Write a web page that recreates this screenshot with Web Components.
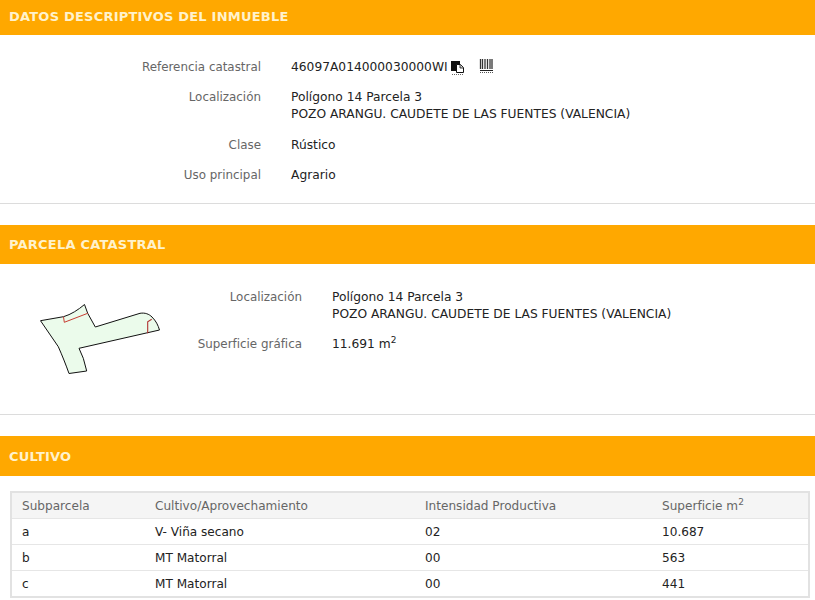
<!DOCTYPE html>
<html lang="es">
<head>
<meta charset="utf-8">
<title>Datos del inmueble</title>
<style>
  html, body { margin: 0; padding: 0; background: #fff; }
  body { font: 12.25px/17px "DejaVu Sans", sans-serif; color: #222; width: 815px; height: 600px; overflow: hidden; }
  x-section.first { --barHeight: 35px; --barPad: 0 0 3px; --bodyHeight: 169px; --gapAfter: 21px; }
  x-section.second { --barHeight: 39px; --bodyHeight: 151px; --gapAfter: 21px; }
  x-section.third { --barHeight: 40px; --barPad: 1px 0 0; --bodyHeight: auto; --gapAfter: 0; --ruleWidth: 0; }
</style>
</head>
<body>
<x-section class="first" title-text="DATOS DESCRIPTIVOS DEL INMUEBLE">
  <x-rows style="--labelWidth: 261px; --top: 24px">
    <x-row label="Referencia catastral">46097A014000030000WI<x-copy-icon></x-copy-icon><x-barcode-icon></x-barcode-icon></x-row>
    <x-row label="Localización">Polígono 14 Parcela 3<br>POZO ARANGU. CAUDETE DE LAS FUENTES (VALENCIA)</x-row>
    <x-row label="Clase" style="margin-top: 1px">Rústico</x-row>
    <x-row label="Uso principal">Agrario</x-row>
  </x-rows>
</x-section>

<x-section class="second" title-text="PARCELA CATASTRAL">
  <x-parcel>
    <x-parcel-map slot="map"></x-parcel-map>
    <x-rows style="--labelWidth: 112px; --top: 25px">
      <x-row label="Localización">Polígono 14 Parcela 3<br>POZO ARANGU. CAUDETE DE LAS FUENTES (VALENCIA)</x-row>
      <x-row label="Superficie gráfica">11.691 m<sup style="font-size:9px;line-height:0;vertical-align:5px">2</sup></x-row>
    </x-rows>
  </x-parcel>
</x-section>

<x-section class="third" title-text="CULTIVO">
  <x-crop-table></x-crop-table>
</x-section>

<script>
class Section extends HTMLElement {
  constructor() {
    super();
    this.attachShadow({ mode: "open" });
    this.shadowRoot.innerHTML = /*html*/ `
    <style>
      :host { display: block; margin-bottom: var(--gapAfter, 0); }
      h2 {
        box-sizing: border-box;
        height: var(--barHeight, 40px);
        margin: 0;
        padding: var(--barPad, 0);
        padding-left: 9px;
        display: flex;
        align-items: center;
        background: #ffa800;
        color: #fff2cc;
        font: bold 13px "DejaVu Sans", sans-serif;
        letter-spacing: .22px;
      }
      .body {
        box-sizing: border-box;
        height: var(--bodyHeight, auto);
        border-bottom: var(--ruleWidth, 1px) solid #dcdcdc;
      }
    </style>
    <h2></h2>
    <div class="body"><slot></slot></div>
    `;
    this.shadowRoot.querySelector("h2").textContent = this.getAttribute("title-text");
  }
}

class Rows extends HTMLElement {
  constructor() {
    super();
    this.attachShadow({ mode: "open" });
    this.shadowRoot.innerHTML = /*html*/ `
    <style>
      :host { display: flex; flex-direction: column; gap: 13px; padding-top: var(--top, 0); }
    </style>
    <slot></slot>
    `;
  }
}

class Row extends HTMLElement {
  constructor() {
    super();
    this.attachShadow({ mode: "open" });
    this.shadowRoot.innerHTML = /*html*/ `
    <style>
      :host { display: flex; gap: 30px; }
      .label { width: var(--labelWidth); flex: none; text-align: right; color: #666; font-size: 11.9px; }
      .value { color: #222; }
    </style>
    <div class="label"></div>
    <div class="value"><slot></slot></div>
    `;
    this.shadowRoot.querySelector(".label").textContent = this.getAttribute("label");
  }
}

class CopyIcon extends HTMLElement {
  constructor() {
    super();
    this.attachShadow({ mode: "open" });
    this.shadowRoot.innerHTML = /*html*/ `
    <style>
      :host { display: inline-block; width: 14px; height: 16px; margin-left: 3px; vertical-align: -5px; }
      svg { display: block; }
    </style>
    <svg width="14" height="16" viewBox="0 0 14 16">
      <path d="M0 1h9v3h-3v7H0z" fill="#111"/>
      <path d="M5.5 4.5h4l3 3v5h-7z" fill="#fff" stroke="#111"/>
      <path d="M9 4.5v3.5h3.5" fill="#ccc" stroke="#111" stroke-width=".8"/>
      <path d="M1 14.5h11" stroke="#666" stroke-dasharray="1 1"/>
    </svg>
    `;
  }
}

class BarcodeIcon extends HTMLElement {
  constructor() {
    super();
    this.attachShadow({ mode: "open" });
    this.shadowRoot.innerHTML = /*html*/ `
    <style>
      :host { display: inline-block; width: 15px; height: 16px; margin-left: 14px; vertical-align: -4px; }
      svg { display: block; }
    </style>
    <svg width="15" height="16" viewBox="0 0 15 16">
      <path d="M1.5 0v10M3.5 0v10M6 0v10M8.5 0v10M11 0v10M13 0v10" stroke="#333" stroke-width="1.3"/>
      <path d="M1 11.5h13" stroke="#222"/>
      <path d="M1 13.5h13" stroke="#555" stroke-dasharray="1 1"/>
    </svg>
    `;
  }
}

class Parcel extends HTMLElement {
  constructor() {
    super();
    this.attachShadow({ mode: "open" });
    this.shadowRoot.innerHTML = /*html*/ `
    <style>
      :host { display: flex; }
      .map { width: 150px; flex: none; padding: 39px 0 0 40px; }
    </style>
    <div class="map"><slot name="map"></slot></div>
    <slot></slot>
    `;
  }
}

class ParcelMap extends HTMLElement {
  constructor() {
    super();
    this.attachShadow({ mode: "open" });
    this.shadowRoot.innerHTML = /*html*/ `
    <style>
      :host { display: block; width: 130px; height: 80px; }
      svg { display: block; }
    </style>
    <svg width="130" height="80" viewBox="40 303 130 80">
      <path d="M40.5 320.7L63.5 316.7C71 314.5 78 310 84.5 304.5L87.7 313.3L95.3 327L140 313.3C145 312.5 149 314 152 317C156 321 158 325 159.5 330L79 348.3L83.3 358.3L86.7 371L69 373.5C66 365 62 355 58.3 346.7Z"
        fill="#ebfbeb" stroke="#111" stroke-width="1"/>
      <path d="M63.5 316.7L64.3 322.3L87.7 313.3" fill="none" stroke="#c83c32"/>
      <path d="M147.7 333.3V321.7L151.7 319.3" fill="none" stroke="#b03030" stroke-width="1.1"/>
    </svg>
    `;
  }
}

class CropTable extends HTMLElement {
  #rows = [
    ["a", "V- Viña secano", "02", "10.687"],
    ["b", "MT Matorral", "00", "563"],
    ["c", "MT Matorral", "00", "441"],
  ];
  constructor() {
    super();
    this.attachShadow({ mode: "open" });
    this.shadowRoot.innerHTML = /*html*/ `
    <style>
      :host { display: block; padding: 15px 5px 0 10px; font-size: 12.1px; }
      .table { border: 2px solid #e2e2e2; }
      .row {
        display: grid;
        grid-template-columns: 133px 270px 237px 1fr;
        height: 26px;
        padding-top: 1px;
        align-items: center;
        border-top: 1px solid #e6e6e6;
        box-sizing: border-box;
      }
      .row:first-child { border-top: 0; height: 25px; background: #f5f5f5; color: #666; }
      .row:last-child { padding-top: 2px; }
      .row > div { padding-left: 10px; }
      sup { font-size: 9px; line-height: 0; vertical-align: 5px; }
    </style>
    <div class="table">
      <div class="row"><div>Subparcela</div><div>Cultivo/Aprovechamiento</div><div>Intensidad Productiva</div><div>Superficie m<sup>2</sup></div></div>
    </div>
    `;
    const table = this.shadowRoot.querySelector(".table");
    this.#rows.forEach((cells) => {
      const row = document.createElement("div");
      row.className = "row";
      cells.forEach((text) => {
        const cell = document.createElement("div");
        cell.textContent = text;
        row.append(cell);
      });
      table.append(row);
    });
  }
}

customElements.define("x-section", Section);
customElements.define("x-rows", Rows);
customElements.define("x-row", Row);
customElements.define("x-copy-icon", CopyIcon);
customElements.define("x-barcode-icon", BarcodeIcon);
customElements.define("x-parcel", Parcel);
customElements.define("x-parcel-map", ParcelMap);
customElements.define("x-crop-table", CropTable);
</script>
</body>
</html>
